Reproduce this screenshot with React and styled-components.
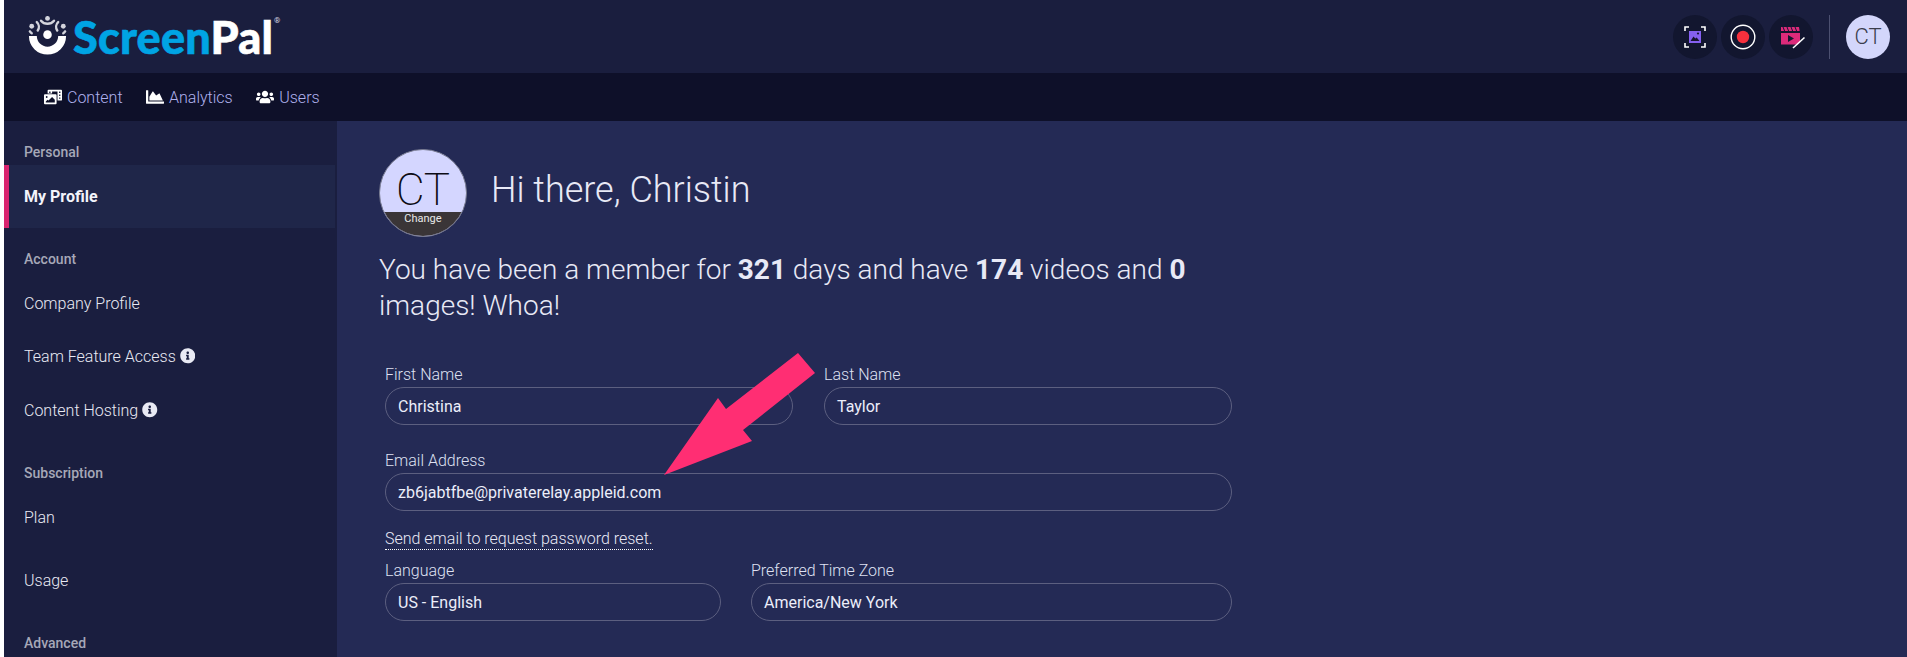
import styled, { createGlobalStyle } from 'styled-components';
import { FaPhotoVideo, FaChartArea, FaUsers, FaInfoCircle } from 'react-icons/fa';

const Global = createGlobalStyle`
html, body {
  margin: 0;
  height: 100%;
  overflow: hidden;
  background: #fff;
}
body {
  padding-left: 4px;
  box-sizing: border-box;
  font-family: Roboto, "Liberation Sans", sans-serif;
}
`
const Page = styled.div`
display: flex;
flex-direction: column;
height: 657px;
position: relative;
overflow: hidden;
`
const Header = styled.header`
flex: 0 0 73px;
display: flex;
align-items: center;
justify-content: space-between;
background: #1a1e3e;
padding: 0 17px 0 24px;
`
const Logo = styled.div`
display: flex;
align-items: flex-start;
`
const LogoText = styled.div`
font-family: Lato, sans-serif;
font-weight: 900;
font-size: 45px;
line-height: 54px;
letter-spacing: 0.2px;
margin-left: 6px;
color: #00a4e4;
-webkit-text-stroke: 0.6px currentColor;
span { color: #fff; }
`
const Registered = styled.span`
font-family: Roboto, sans-serif;
font-size: 8px;
font-weight: 400;
color: #d5d7e2;
margin: 6px 0 0 1px;
line-height: 10px;
`
const Tools = styled.div`
display: flex;
align-items: center;
gap: 4px;
`
const ToolButton = styled.div`
width: 44px;
height: 44px;
border-radius: 50%;
background: #12162f;
display: flex;
align-items: center;
justify-content: center;
`
const Divider = styled.div`
width: 1px;
height: 44px;
background: #4c5070;
margin: 0 12px;
`
const UserBadge = styled.div`
width: 44px;
height: 44px;
border-radius: 50%;
background: #d3d6fb;
color: #3a3d4c;
font-size: 22px;
font-weight: 300;
display: flex;
align-items: center;
justify-content: center;
`
const Nav = styled.nav`
flex: 0 0 48px;
display: flex;
align-items: center;
gap: 23.5px;
background: #0e1029;
padding-left: 40px;
`
const NavLink = styled.a`
display: flex;
align-items: center;
gap: 5px;
color: #b0b2ee;
font-size: 16px;
font-weight: 300;
svg { color: #fff; font-size: 18px; }
`
const Body = styled.div`
flex: 1;
display: flex;
min-height: 0;
background: #242a55;
`
const Sidebar = styled.aside`
flex: 0 0 333px;
background: #1a1e3f;
padding-top: 22px;
`
const SectionTitle = styled.div`
font-size: 14px;
font-weight: 500;
line-height: 18px;
color: #a6a8b8;
padding-left: 20px;
margin-top: ${p => p.$top || 0}px;
margin-bottom: ${p => p.$bottom || 0}px;
`
const SideItem = styled.div`
display: flex;
align-items: center;
gap: 4px;
height: ${p => p.$h || 54}px;
padding-left: 20px;
font-size: 16px;
font-weight: 300;
color: #e9eaf4;
svg { font-size: 15.5px; color: #e9eaf4; }
`
const ActiveItem = styled(SideItem)`
height: 63px;
width: 331px;
box-sizing: border-box;
margin-top: 4px;
padding-left: 15px;
border-left: 5px solid #d9246f;
background: #1f2649;
font-weight: 700;
color: #f3f4fb;
`
const Main = styled.main`
flex: 1;
padding: 28px 0 0 42px;
color: #e8e9f6;
`
const Greeting = styled.div`
display: flex;
align-items: center;
gap: 24px;
`
const Avatar = styled.div`
position: relative;
width: 88px;
height: 88px;
border-radius: 50%;
box-sizing: border-box;
border: 1px solid #777a90;
background: #d4d6ff;
color: #0c0c14;
font-size: 44px;
font-weight: 200;
overflow: hidden;
display: flex;
justify-content: center;
padding-top: 18px;
line-height: 45px;
`
const ChangeBar = styled.div`
position: absolute;
left: 0;
right: 0;
bottom: 0;
height: 24px;
background: #3a3537;
color: #e8e8e8;
font-size: 11px;
font-weight: 400;
line-height: 14px;
text-align: center;
`
const Title = styled.h1`
margin: 0 0 6px;
font-size: 36px;
font-weight: 300;
line-height: 44px;
`
const Stats = styled.p`
width: 830px;
margin: 15px 0 0;
font-size: 28px;
font-weight: 300;
line-height: 36px;
b { font-weight: 700; }
`
const Form = styled.div`
width: 847px;
margin: 41px 0 0 6px;
display: flex;
flex-direction: column;
`
const Row = styled.div`
display: flex;
gap: ${p => p.$gap || 30}px;
margin-top: ${p => p.$top || 0}px;
`
const Field = styled.div`
flex: ${p => p.$w ? `0 0 ${p.$w}px` : 1};
min-width: 0;
`
const Label = styled.div`
font-size: 16px;
font-weight: 300;
line-height: 19px;
margin-bottom: 3px;
color: #dfe1f2;
`
const Value = styled.div`
height: 38px;
box-sizing: border-box;
border: 1px solid #5c5f80;
border-radius: 19px;
padding-left: 12px;
line-height: 37px;
font-size: 16px;
font-weight: 400;
color: #eceefa;
`
const ResetLink = styled.a`
align-self: flex-start;
margin: 18px 0 0;
font-size: 16px;
font-weight: 300;
line-height: 19px;
padding-bottom: 1px;
border-bottom: 1px dotted #fff;
color: #e8e9f6;
`
const ArrowOverlay = styled.svg`
position: absolute;
left: 0;
top: 0;
pointer-events: none;
`

function LogoMark() {
  return (
    <svg width="39" height="41" viewBox="0 0 42 44" style={{ marginTop: 6 }}>
      <path d="M1 21.5h8.5a11.5 11.5 0 0 0 23 0H41a20 20 0 0 1-40 0z" fill="#fff" />
      <circle cx="21" cy="20" r="4.6" fill="#fff" />
      <circle cx="21" cy="2.5" r="2.6" fill="#d3d4dc" />
      <path d="M14 5a9 9 0 0 0 14 0" fill="none" stroke="#d3d4dc" strokeWidth="2.6" strokeLinecap="round" />
      <circle cx="4" cy="11" r="2.6" fill="#d3d4dc" />
      <path d="M9.5 6.5a7 7 0 0 1 1 9M2 16.5a7 7 0 0 0 2 2" fill="none" stroke="#d3d4dc" strokeWidth="2.6" strokeLinecap="round" />
      <circle cx="38" cy="11" r="2.6" fill="#d3d4dc" />
      <path d="M32.5 6.5a7 7 0 0 0-1 9M40 16.5a7 7 0 0 1-2 2" fill="none" stroke="#d3d4dc" strokeWidth="2.6" strokeLinecap="round" />
    </svg>
  );
}

function CaptureIcon() {
  return (
    <svg width="22" height="22" viewBox="0 0 22 22" fill="none">
      <rect x="5" y="5" width="12" height="12" fill="#8560f0" />
      <path d="M6.5 15l3-4.5 1.8 2 1.4-1 2.8 3.5z" fill="#17142f" />
      <circle cx="14" cy="7.5" r="1.1" fill="#17142f" />
      <path d="M1 5V1h4M17 1h4v4M1 17v4h4M21 17v4h-4" stroke="#fff" strokeWidth="1.6" />
    </svg>
  );
}

function RecordIcon() {
  return (
    <svg width="26" height="26" viewBox="0 0 26 26">
      <circle cx="13" cy="13" r="11.8" fill="none" stroke="#fff" strokeWidth="1.4" />
      <circle cx="13" cy="13" r="6.2" fill="#f6303d" />
    </svg>
  );
}

function EditorIcon() {
  return (
    <svg width="26" height="26" viewBox="0 0 26 26" fill="none" style={{ marginLeft: 4 }}>
      <path d="M1 3h18l.6 4H1z" fill="#dc2a7a" />
      <path d="M3 3l1.6 4M7 3l1.6 4M11 3l1.6 4M15 3l1.6 4" stroke="#12162f" strokeWidth="1" />
      <path d="M1 9h19v9.5l-2 2H1z" fill="#dc2a7a" />
      <path d="M8 11l6 3.5L8 18z" fill="#12162f" />
      <path d="M13 24L24.5 13.5" stroke="#fff" strokeWidth="1.6" />
    </svg>
  );
}

export default function App() {
  return (
    <>
      <Global />
      <Page>
        <Header>
          <Logo>
            <LogoMark />
            <LogoText>Screen<span>Pal</span></LogoText>
            <Registered>®</Registered>
          </Logo>
          <Tools>
            <ToolButton><CaptureIcon /></ToolButton>
            <ToolButton><RecordIcon /></ToolButton>
            <ToolButton><EditorIcon /></ToolButton>
            <Divider />
            <UserBadge>CT</UserBadge>
          </Tools>
        </Header>
        <Nav>
          <NavLink><FaPhotoVideo />Content</NavLink>
          <NavLink><FaChartArea />Analytics</NavLink>
          <NavLink><FaUsers />Users</NavLink>
        </Nav>
        <Body>
          <Sidebar>
            <SectionTitle>Personal</SectionTitle>
            <ActiveItem>My Profile</ActiveItem>
            <SectionTitle $top={22} $bottom={9}>Account</SectionTitle>
            <SideItem $h={52}>Company Profile</SideItem>
            <SideItem>Team Feature Access <FaInfoCircle /></SideItem>
            <SideItem>Content Hosting <FaInfoCircle /></SideItem>
            <SectionTitle $top={27} $bottom={9}>Subscription</SectionTitle>
            <SideItem $h={52}>Plan</SideItem>
            <SideItem $h={74}>Usage</SideItem>
            <SectionTitle $top={17}>Advanced</SectionTitle>
          </Sidebar>
          <Main>
            <Greeting>
              <Avatar>
                CT
                <ChangeBar>Change</ChangeBar>
              </Avatar>
              <Title>Hi there, Christin</Title>
            </Greeting>
            <Stats>
              You have been a member for <b>321</b> days and have <b>174</b> videos and <b>0</b> images! Whoa!
            </Stats>
            <Form>
              <Row $gap={31}>
                <Field $w={408}>
                  <Label>First Name</Label>
                  <Value>Christina</Value>
                </Field>
                <Field>
                  <Label>Last Name</Label>
                  <Value>Taylor</Value>
                </Field>
              </Row>
              <Row $top={26}>
                <Field>
                  <Label>Email Address</Label>
                  <Value>zb6jabtfbe@privaterelay.appleid.com</Value>
                </Field>
              </Row>
              <ResetLink>Send email to request password reset.</ResetLink>
              <Row $top={11}>
                <Field $w={336}>
                  <Label>Language</Label>
                  <Value>US - English</Value>
                </Field>
                <Field>
                  <Label>Preferred Time Zone</Label>
                  <Value>America/New York</Value>
                </Field>
              </Row>
            </Form>
          </Main>
        </Body>
        <ArrowOverlay width="1903" height="657" viewBox="4 0 1903 657">
          <polygon points="798,353 815,373 743,430 752,441 664,475 718,398 726,409" fill="#ff2e73" />
        </ArrowOverlay>
      </Page>
    </>
  );
}
